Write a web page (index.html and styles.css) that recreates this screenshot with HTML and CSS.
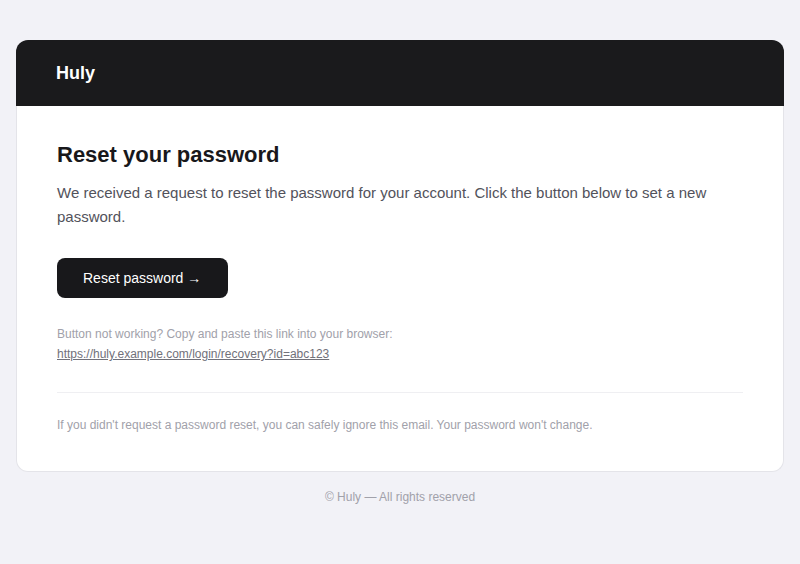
FILE: index.html
```html
<!DOCTYPE html>
<html lang="en">
<head>
<meta charset="utf-8">
<title>Reset your password</title>
<link rel="stylesheet" href="styles.css">
</head>
<body>
<div class="wrap">
  <div class="card">
    <div class="card-header">Huly</div>
    <div class="card-body">
      <h1 class="title">Reset your password</h1>
      <p class="lead">We received a request to reset the password for your account. Click the button below to set a new password.</p>
      <a class="btn" href="#">Reset password →</a>
      <p class="hint">Button not working? Copy and paste this link into your browser:<br><a class="link" href="#">https://huly.example.com/login/recovery?id=abc123</a></p>
      <hr class="divider">
      <p class="note">If you didn't request a password reset, you can safely ignore this email. Your password won't change.</p>
    </div>
  </div>
  <div class="footer">© Huly — All rights reserved</div>
</div>
</body>
</html>
```
FILE: styles.css
```css
html, body {
  margin: 0;
  padding: 0;
  background: #f2f2f7;
  font-family: "Liberation Sans", Arial, sans-serif;
}
.wrap {
  padding: 40px 16px;
}
.card {
  background: transparent;
}
.card-header {
  background: #1a1a1c;
  color: #ffffff;
  height: 66px;
  border-radius: 12px 12px 0 0;
  padding: 0 40px;
  display: flex;
  align-items: center;
  font-size: 18px;
  font-weight: 700;
}
.card-body {
  background: #ffffff;
  border: 1px solid #e4e4e9;
  border-top: 0;
  border-radius: 0 0 12px 12px;
  padding: 35px 40px 36px;
}
.title {
  margin: 0;
  font-size: 22px;
  line-height: 28px;
  font-weight: 700;
  color: #18181b;
}
.lead {
  margin: 12px 0 0;
  font-size: 15px;
  line-height: 24px;
  color: #52525b;
}
.btn {
  display: inline-block;
  margin-top: 29px;
  background: #18181b;
  color: #ffffff;
  text-decoration: none;
  font-size: 14px;
  line-height: 16px;
  padding: 12px 27px 12px 26px;
  border-radius: 8px;
}
.hint {
  margin: 26px 0 0;
  font-size: 12px;
  line-height: 20px;
  color: #a1a1aa;
}
.link {
  color: #71717a;
  text-decoration: underline;
}
.divider {
  border: 0;
  border-top: 1px solid #efeff2;
  margin: 28px 0 22px;
}
.note {
  margin: 0;
  font-size: 12px;
  line-height: 20px;
  color: #a1a1aa;
}
.footer {
  text-align: center;
  margin-top: 15px;
  font-size: 12px;
  line-height: 20px;
  color: #a1a1aa;
}
```
